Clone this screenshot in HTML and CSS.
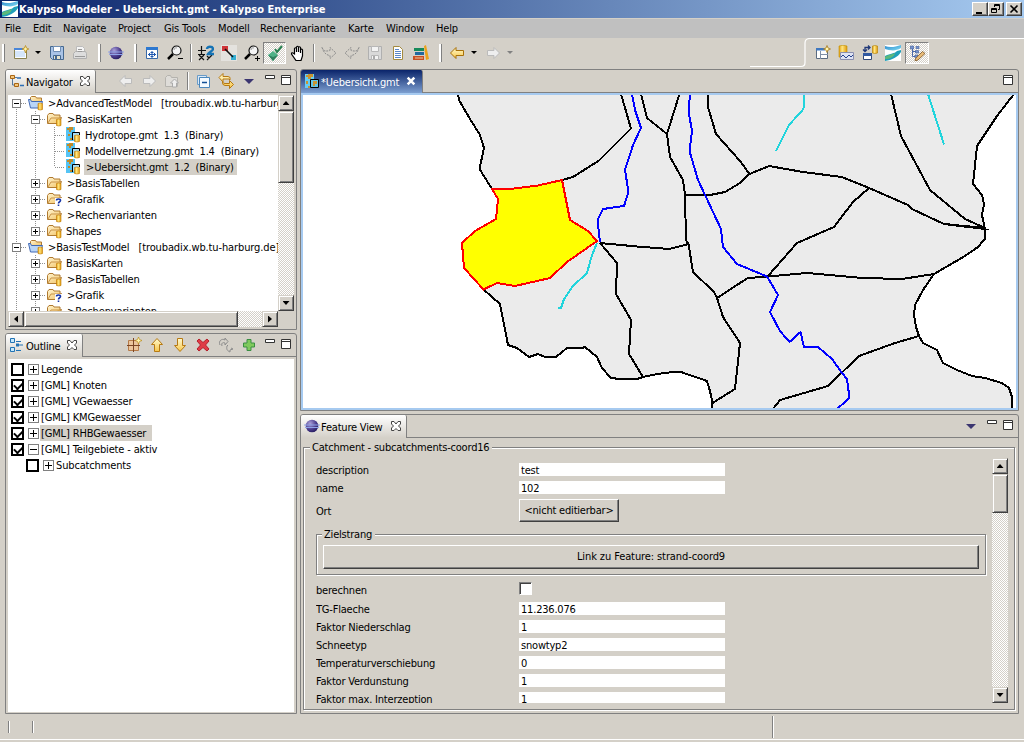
FILE: index.html
```html
<!DOCTYPE html>
<html lang="de">
<head>
<meta charset="utf-8">
<title>Kalypso Modeler - Uebersicht.gmt - Kalypso Enterprise</title>
<link rel="stylesheet" href="styles.css">
</head>
<body>
<svg class="defs" width="0" height="0">
<defs>
<linearGradient id="gold" x1="0" y1="0" x2="0" y2="1"><stop offset="0" stop-color="#fffbd0"/><stop offset="1" stop-color="#f7c64a"/></linearGradient>
<linearGradient id="fold" x1="0" y1="0" x2="1" y2="1"><stop offset="0" stop-color="#fff3cf"/><stop offset="1" stop-color="#f2c465"/></linearGradient>
<linearGradient id="cyl" x1="0" y1="0" x2="1" y2="0"><stop offset="0" stop-color="#e09a10"/><stop offset=".4" stop-color="#ffe680"/><stop offset="1" stop-color="#e09a10"/></linearGradient>
<radialGradient id="ball" cx=".35" cy=".3" r=".8"><stop offset="0" stop-color="#a99fd8"/><stop offset=".6" stop-color="#4a3b8c"/><stop offset="1" stop-color="#1f1555"/></radialGradient>
<linearGradient id="water" x1="0" y1="0" x2="1" y2="1"><stop offset="0" stop-color="#2b86cc"/><stop offset="1" stop-color="#7fdcf2"/></linearGradient>
</defs>
<symbol id="kalypso" viewBox="0 0 16 16"><path fill="#fff" d="M0 0h16v16H0z"/><path fill="url(#water)" d="M0 1c5 2 10 1 16-1v3C10 7 4 5 0 4z"/><path fill="#1f9fb8" d="M0 11c6-3 9-2 12-5l4-1v2c-3 5-9 8-16 9z"/><path fill="#5cb87a" d="M0 12c4-3 7-2 10-4-1 4-5 6-10 6z"/></symbol>
<symbol id="new" viewBox="0 0 16 16"><path fill="#fbfbff" stroke="#8a8250" d="M1.500 3.500h12v10h-12z"/><path fill="#4a86d8" d="M1 3h9v2H1z"/><path fill="#d5e6fb" d="M2 6h10v6H2z"/><path fill="#fdf3a8" stroke="#b98a1c" stroke-width=".8" d="M12.500.5l1 2.500 2.300 1-2.300 1-1 3-1-3-2.500-1 2.500-1z"/></symbol>
<symbol id="save" viewBox="0 0 16 16"><path fill="#a9c3e6" stroke="#45688f" d="M1.500 1.500h13v13h-11l-2-2z"/><path fill="#fff" stroke="#6e8db3" d="M4.500 1.500h7v5h-7z"/><path fill="#e7e3cd" stroke="#45688f" d="M4.500 10.500h7v4h-7z"/><path fill="#45688f" d="M6 11h2v3H6z"/></symbol>
<symbol id="saveoff" viewBox="0 0 16 16"><path fill="#d9d9d9" stroke="#b0b0b0" d="M1.500 1.500h13v13h-13z"/><path fill="#f4f4f4" stroke="#b8b8b8" d="M4.500 1.500h7v5h-7zM4.500 10.500h7v4h-7z"/><path fill="#aaa" d="M6 11h2v3H6z"/></symbol>
<symbol id="print" viewBox="0 0 16 16"><path fill="#f5f5f5" stroke="#bbb" d="M4.500 1.500h6l2 2v5h-8z"/><path fill="#ddd" stroke="#b0b0b0" d="M1.500 8.500l2-2h10l1 2v5h-13z"/><path stroke="#999" d="M6 4.500h4M6 6.500h4M3 11.500h10"/></symbol>
<symbol id="eclipse" viewBox="0 0 16 16"><circle cx="8" cy="8" r="6.300" fill="url(#ball)"/><path stroke="#8fa3e8" stroke-width="1.200" d="M0 7h16M1 9.500h14"/></symbol>
<symbol id="fullmap" viewBox="0 0 16 16"><path fill="#fff" stroke="#3a6aa8" d="M2.500 2.500h11v11h-11z"/><path fill="#2d78d0" d="M2 2h12v3H2z"/><path stroke="#1f58b0" d="M8 6v7M4 9.500h8M6.500 7.500h3M6.500 11.500h3M5.500 8v3M10.500 8v3"/></symbol>
<symbol id="zoomout" viewBox="0 0 16 16"><path stroke="#000" stroke-width="2.500" d="M1 14l5-5"/><circle cx="9.500" cy="5.500" r="4.500" fill="#f4f4f4" stroke="#111" stroke-width="1.200"/><path stroke="#999" fill="none" d="M7 5c0-2 2-2.500 3-2"/><path stroke="#000" d="M11 13.500h5"/></symbol>
<symbol id="zoomin" viewBox="0 0 16 16"><path stroke="#000" stroke-width="2.500" d="M1 14l5-5"/><circle cx="9.500" cy="5.500" r="4.500" fill="#f4f4f4" stroke="#111" stroke-width="1.200"/><path stroke="#999" fill="none" d="M7 5c0-2 2-2.500 3-2"/><path stroke="#000" d="M11 13.500h5M13.500 11v5"/></symbol>
<symbol id="info" viewBox="0 0 16 16"><path stroke="#111" stroke-width="1.200" d="M0 5.500h8M3.500 1v8M0 9.500h7M1 10l5 5M6 10l-5 5M9 11l2 2M14 10l-5 5"/><path fill="none" stroke="#1673b5" stroke-width="2.400" d="M9 4c0-3 6-3 6 0 0 2-4 3-5 5h6"/></symbol>
<symbol id="relation" viewBox="0 0 16 16"><path fill="#e4e2de" d="M0 0h16v16H0z"/><path fill="#cf3438" d="M1 1h6v5H1z"/><path fill="#35aed2" d="M10 10h5v5h-5z"/><path stroke="#111" stroke-width="1.600" d="M4 4l8 8"/></symbol>
<symbol id="edit" viewBox="0 0 16 16"><path fill="#4fb287" d="M1 10l5-4 5 4-5 6z"/><path fill="#2f805d" d="M1 10l5 6 5-6-5 2z"/><path fill="none" stroke="#278050" stroke-width="2" d="M8 4l2 3 5-6"/></symbol>
<symbol id="hand" viewBox="0 0 16 16"><path fill="#fff" stroke="#000" stroke-width="1.200" d="M4.500 9V3.500q1-1.500 2 0V7 2q1-1.500 2 0v5-4.500q1-1.500 2 0V8 4.500q1.500-1 2 .5v6L11 15.500H6L1.500 9q0-1.800 1.500-1z"/></symbol>
<symbol id="redo" viewBox="0 0 16 16"><path fill="none" stroke="#8c8c8c" stroke-dasharray="2 1" d="M1 2.500c2 4 4 4 8 3V2.500l6 5.500-6 5.500v-3C5 10 3 8 1 2.500z"/></symbol>
<symbol id="undo" viewBox="0 0 16 16"><path fill="none" stroke="#8c8c8c" stroke-dasharray="2 1" d="M15 2.500c-2 4-4 4-8 3V2.500L1 8l6 5.500v-3c4-.5 6-2.500 8-8z"/></symbol>
<symbol id="doc" viewBox="0 0 16 16"><path fill="#fff" stroke="#a38a40" d="M3.500 1.500h6l3 3v10h-9z"/><path stroke="#5a86c8" d="M5 4.500h4M5 6.500h6M5 8.500h6M5 10.500h6M5 12.500h6"/></symbol>
<symbol id="books" viewBox="0 0 16 16"><path fill="#168a5a" d="M1 3h10v3H1z"/><path fill="#22689e" d="M2 7h9v3H2z"/><path fill="#c94e22" d="M0 11h11v4H0z"/><path stroke="#e8c9a0" d="M2 13h8"/><path fill="#eaa21c" d="M11 1l2-1 3 14-3 1z"/></symbol>
<symbol id="back" viewBox="0 0 16 16"><path fill="url(#gold)" stroke="#a8700a" d="M1.500 8l5.500-5.500v3h7.500v5H7v3z"/></symbol>
<symbol id="fwdoff" viewBox="0 0 16 16"><path fill="#eee" stroke="#bbb" d="M14.500 8L9 2.500v3H2.500v5H9v3z"/></symbol>
<symbol id="backoff" viewBox="0 0 16 16"><path fill="#eee" stroke="#bbb" d="M1.500 8L7 2.500v3h6.500v5H7v3z"/></symbol>
<symbol id="upoff" viewBox="0 0 16 16"><path fill="#dedcd8" stroke="#b5b3ae" d="M1.500 4.500l2-2h3l1 2h6v9h-12z"/><path fill="#eee" stroke="#aaa" d="M10.500 6l4 4h-2v4h-4v-4h-2z"/></symbol>
<symbol id="collapse" viewBox="0 0 16 16"><path fill="#dbe9f7" stroke="#6a9cc8" d="M2.500 2.500h9v9h-9z"/><path fill="#f4faff" stroke="#4a86bb" d="M4.500 4.500h10v10h-10z"/><path stroke="#124f95" stroke-width="1.500" d="M7 9.500h5"/></symbol>
<symbol id="link" viewBox="0 0 16 16"><path fill="url(#gold)" stroke="#b67912" d="M1 4.500l4-4v3h5q3 0 2 3.500-1-1.500-2-1H5v3zM15.500 11.500l-4 4v-3H7Q4 12 4.500 9 5.500 10.500 7 10.500h4.500v-3z"/></symbol>
<symbol id="up" viewBox="0 0 16 16"><path fill="url(#gold)" stroke="#b67912" d="M8 1.500l5.500 6H10.500v7h-5v-7H2.500z"/></symbol>
<symbol id="down" viewBox="0 0 16 16"><path fill="url(#gold)" stroke="#b67912" d="M8 14.500l5.500-6H10.500v-7h-5v7H2.500z"/></symbol>
<symbol id="delete" viewBox="0 0 16 16"><path fill="#e03b46" stroke="#b5202c" d="M4 2l4 3.500L12 2l2 2-3.500 4 3.500 4-2 2-4-3.500L4 14l-2-2 3.500-4L2 4z"/></symbol>
<symbol id="refresh" viewBox="0 0 16 16"><path fill="none" stroke="#8c8c8c" d="M2 8C0 4 4 1 7 3V1l3 3.500L7 8V6C5 5 3 6 4 9M10 8l-1 1c-1 4 1 5 3 6v-2l3-1-2-1"/></symbol>
<symbol id="plus" viewBox="0 0 16 16"><path fill="#7fc95c" stroke="#3a8f43" d="M6 2.500h4V6h3.500v4H10v3.500H6V10H2.500V6H6z"/></symbol>
<symbol id="newtheme" viewBox="0 0 16 16"><path fill="#ebc49c" stroke="#b57a48" d="M2.500 3.500h10v10h-10z"/><path stroke="#7a4424" d="M7.500 1v14M1 8.500h13"/><path fill="#fff7b0" stroke="#b98a1c" stroke-width=".7" d="M12.500 0l1 2.500 2.500 1-2.500 1-1 2.500-1-2.500-2.500-1 2.500-1z"/></symbol>
<symbol id="nav" viewBox="0 0 16 16"><path fill="#f4c77c" stroke="#a86514" d="M1.500 2.500h4v3h-4zM5.500 10.500h4v3h-4z"/><path fill="none" stroke="#55779c" d="M3.500 6v6H5M6 4.500h2"/><path stroke="#2e6fb5" stroke-width="1.500" d="M8 5h4M11 12.500h4"/></symbol>
<symbol id="outline" viewBox="0 0 16 16"><path fill="#c6e8fb" stroke="#2273b4" d="M1.500 1.500h4v4h-4zM1.500 10.500h4v4h-4z"/><path stroke="#2273b4" d="M7 4.500h5M10 8h4M7 13.500h5"/><path fill="#2273b4" d="M7 6.500h3v3H7z"/></symbol>
<symbol id="map" viewBox="0 0 16 16"><path fill="#66cdf5" d="M1 1h9v14H1z"/><path fill="#c99432" d="M4 1h5v3H7v2H4V4H2V2h2zM2 8h2v3H2zM4 13h2v2H4z"/><path fill="#63c4e8" stroke="#000" d="M6.500 6.500h8v8h-8z"/><path fill="#c99432" d="M9 8h4v3h-2v2H9z"/></symbol>
<symbol id="gmt" viewBox="0 0 16 16"><path fill="#55c4f5" d="M0 0h9v14H0z"/><path fill="#c08b28" d="M3 0h4v3H5v2H3V3H1V1h2zM2 7h2v2H2zM4 11h2v2H4z"/><path fill="#a9dff5" stroke="#000" d="M6.500 13V5.500h7V8"/><path fill="url(#cyl)" stroke="#c07800" stroke-width=".6" d="M8.500 8.500q2.500-1 5 0v6q-2.500 1-5 0z"/></symbol>
<symbol id="folder" viewBox="0 0 16 16"><path fill="url(#fold)" stroke="#b07a30" d="M.5 12.500v-8l1.500-2h4l1 1.500h6V7l1.500-.5-2.500 6z"/><path fill="none" stroke="#c99448" d="M1 12l3-5h9"/><path fill="url(#cyl)" stroke="#c07800" stroke-width=".6" d="M9.500 8.500q2.500-1 4.500 0v6q-2 1-4.500 0z"/></symbol>
<symbol id="folderq" viewBox="0 0 16 16"><path fill="url(#fold)" stroke="#b07a30" d="M.5 12.500v-8l1.500-2h4l1 1.500h6V7l1.500-.5-2.500 6z"/><path fill="none" stroke="#c99448" d="M1 12l3-5h9"/><path fill="#fff" d="M8 7h7v8H8z"/><path fill="none" stroke="#1635a8" stroke-width="1.600" d="M9.500 9.500c0-2 4-2 4 0 0 1.500-2 1-2 3M11.500 13.500V15"/></symbol>
<symbol id="project" viewBox="0 0 16 16"><path fill="url(#fold)" stroke="#b07a30" d="M2.500 5.500v-3l1-1h4l1 1.500h5v4h-11z"/><path fill="#b9d5f7" stroke="#4169b5" d="M.5 4.500h2l1 2h11l-2 6.500H2.500z"/><path fill="url(#cyl)" stroke="#c07800" stroke-width=".6" d="M10 8.500q2.300-1 4.500 0v6q-2.200 1-4.500 0z"/></symbol>
<symbol id="persp" viewBox="0 0 16 16"><path fill="#fff" stroke="#5a6a80" d="M1.500 3.500h11v10h-11z"/><path fill="#3f78c0" d="M1 3h9v2.500H1z"/><path stroke="#8090a8" d="M5.500 6v8M6 9.500h7"/><path fill="#fff7b0" stroke="#a87a1c" stroke-width=".8" d="M12 .5l1 2.500 2.500 1L13 5l-1 2.500L11 5 8.500 4 11 3z"/></symbol>
<symbol id="dbgraph" viewBox="0 0 16 16"><path fill="url(#cyl)" stroke="#c09000" stroke-width=".6" d="M1 1q4-1.500 8 0v11q-4 1.500-8 0z"/><path fill="#dfe3f3" stroke="#8a8fb0" d="M2.500 7.500h13v7h-13z"/><path fill="none" stroke="#24418c" d="M3 12l2-2 3 3 3-3 2 2 2-2"/></symbol>
<symbol id="dbtable" viewBox="0 0 16 16"><path fill="#fff" stroke="#304878" d="M1.500 8.500h8v6h-8z"/><path fill="#3058a0" d="M1 8h9v3H1z"/><path fill="none" stroke="#203878" stroke-width="1.300" d="M3 6V2.500h5M6 .5l2 2-2 2M1 4.500l2 2 2-2"/><path fill="url(#cyl)" stroke="#b08000" stroke-width=".6" d="M10.500 1q2.500-1 5 0v7q-2.500 1-5 0z"/></symbol>
<symbol id="treeedit" viewBox="0 0 16 16"><path fill="none" stroke="#4a68a8" d="M3.500 3v8.500H6M4 6.500h4"/><path fill="#7894cc" stroke="#3c5a9c" stroke-width=".6" d="M1.500 1h3v3h-3zM7 1.500h3v2H7zM6.500 5.500h3v2.500h-3zM6 10h3v2.500H6z"/><path fill="#e8bb78" stroke="#7a5424" stroke-width=".8" d="M13.500 6.500L16 8.500 9 15l-3 1 .8-3z"/></symbol>
<symbol id="close" viewBox="0 0 12 12"><path fill="#fff" stroke="#444" d="M1.500 1.500h2.500l2 2.500 2-2.500h2.500V4L8.500 6l2 2v2.500H8L6 8.500l-2 2H1.500V8l2-2-2-2z"/></symbol>
<symbol id="closew" viewBox="0 0 12 12"><path fill="none" stroke="#fff" stroke-width="3" d="M2 2l8 8M10 2l-8 8"/></symbol>
<symbol id="mini" viewBox="0 0 10 4"><path fill="#fff" stroke="#333" d="M.5.5h9v3h-9z"/></symbol>
<symbol id="maxi" viewBox="0 0 10 10"><path fill="#fff" stroke="#333" d="M.5.5h9v9h-9zM1 2.500h8"/></symbol>
<symbol id="tri" viewBox="0 0 10 5"><path fill="#3b3570" d="M0 0h10L5 5z"/></symbol>
</svg>

<div class="window">
<header class="titlebar">
  <svg class="i"><use href="#kalypso"/></svg>
  <span class="title">Kalypso Modeler - Uebersicht.gmt - Kalypso Enterprise</span>
  <span class="wbtn"><svg width="10" height="10"><path fill="#000" d="M1 8h6v2H1z"/></svg></span>
  <span class="wbtn"><svg width="10" height="10"><path fill="none" stroke="#000" d="M3.500 3V.5h5v5H7M3 1.500h6M.5 4.500h5v4h-5zM0 5.500h6"/></svg></span>
  <span class="wbtn last"><svg width="10" height="10"><path stroke="#000" stroke-width="1.600" d="M1.500 1.500l7 7M8.500 1.500l-7 7"/></svg></span>
</header>
<nav class="menubar"><span class="m28">File</span><span class="m30">Edit</span><span class="m55">Navigate</span><span class="m46">Project</span><span class="m54">Gis Tools</span><span class="m42">Modell</span><span class="m88">Rechenvariante</span><span class="m38">Karte</span><span class="m50">Window</span><span>Help</span></nav>
<div class="toolbars">
  <div class="tools">
    <i class="handle h1"></i><b class="t"><svg class="i"><use href="#new"/></svg></b><b class="dd"></b><b class="t"><svg class="i"><use href="#save"/></svg></b><b class="t"><svg class="i"><use href="#print"/></svg></b>
    <i class="handle"></i><b class="t"><svg class="i"><use href="#eclipse"/></svg></b>
    <i class="handle"></i><b class="t"><svg class="i"><use href="#fullmap"/></svg></b><b class="t"><svg class="i"><use href="#zoomout"/></svg></b>
    <i class="sep"></i><b class="t"><svg class="i"><use href="#info"/></svg></b><b class="t"><svg class="i"><use href="#relation"/></svg></b><b class="t"><svg class="i"><use href="#zoomin"/></svg></b><b class="t on"><svg class="i"><use href="#edit"/></svg></b><b class="t"><svg class="i"><use href="#hand"/></svg></b>
    <i class="sep"></i><b class="t"><svg class="i"><use href="#redo"/></svg></b><b class="t"><svg class="i"><use href="#undo"/></svg></b><b class="t"><svg class="i"><use href="#saveoff"/></svg></b><b class="t"><svg class="i"><use href="#doc"/></svg></b><b class="t"><svg class="i"><use href="#books"/></svg></b>
    <i class="handle"></i><b class="t"><svg class="i"><use href="#back"/></svg></b><b class="dd"></b><b class="t"><svg class="i"><use href="#fwdoff"/></svg></b><b class="dd off"></b>
  </div>
  <div class="perspectives">
    <svg class="curve" width="274" height="31"><path fill="none" stroke="#fff" stroke-width="1.200" d="M0 28.500h51q4 0 4-4V5q0-4.500 5-4.500h214"/></svg>
    <b class="t"><svg class="i"><use href="#persp"/></svg></b><b class="t"><svg class="i"><use href="#dbgraph"/></svg></b><b class="t"><svg class="i"><use href="#dbtable"/></svg></b><b class="t"><svg class="i"><use href="#kalypso"/></svg></b><b class="t on"><svg class="i"><use href="#treeedit"/></svg></b>
  </div>
</div>

<main class="workbench">
<div class="left">
  <section class="panel navigator">
    <div class="head"><div class="tab tab-nav"><svg class="i"><use href="#nav"/></svg><span>Navigator</span><svg class="x"><use href="#close"/></svg></div>
      <div class="bar"><b class="t"><svg class="i"><use href="#backoff"/></svg></b><b class="t"><svg class="i"><use href="#fwdoff"/></svg></b><b class="t"><svg class="i"><use href="#upoff"/></svg></b><i class="sep"></i><b class="t"><svg class="i"><use href="#collapse"/></svg></b><b class="t"><svg class="i"><use href="#link"/></svg></b><b class="t"><svg class="tri"><use href="#tri"/></svg></b><svg class="mini"><use href="#mini"/></svg><svg class="maxi"><use href="#maxi"/></svg></div>
    </div>
    <div class="treebox">
      <div class="tree">
        <div class="row"><i class="c first"><u class="ex m"></u></i><svg class="i"><use href="#project"/></svg><span class="proj">&gt;AdvancedTestModel &nbsp;[troubadix.wb.tu-harburg.de]</span></div>
        <div class="row"><i class="c v"></i><i class="c v"><u class="ex m"></u></i><svg class="i"><use href="#folder"/></svg><span>&gt;BasisKarten</span></div>
        <div class="row"><i class="c v"></i><i class="c v"></i><i class="c v h"></i><svg class="i"><use href="#gmt"/></svg><span class="plain">Hydrotope.gmt &nbsp;1.3 &nbsp;(Binary)</span></div>
        <div class="row"><i class="c v"></i><i class="c v"></i><i class="c v h"></i><svg class="i"><use href="#gmt"/></svg><span class="plain">Modellvernetzung.gmt &nbsp;1.4 &nbsp;(Binary)</span></div>
        <div class="row"><i class="c v"></i><i class="c v"></i><i class="c end h"></i><svg class="i"><use href="#gmt"/></svg><span class="sel">&gt;Uebersicht.gmt &nbsp;1.2 &nbsp;(Binary)</span></div>
        <div class="row"><i class="c v"></i><i class="c v"><u class="ex"></u></i><svg class="i"><use href="#folder"/></svg><span>&gt;BasisTabellen</span></div>
        <div class="row"><i class="c v"></i><i class="c v"><u class="ex"></u></i><svg class="i"><use href="#folderq"/></svg><span>&gt;Grafik</span></div>
        <div class="row"><i class="c v"></i><i class="c v"><u class="ex"></u></i><svg class="i"><use href="#folder"/></svg><span>&gt;Rechenvarianten</span></div>
        <div class="row"><i class="c v"></i><i class="c end"><u class="ex"></u></i><svg class="i"><use href="#folder"/></svg><span class="plain">Shapes</span></div>
        <div class="row"><i class="c v"><u class="ex m"></u></i><svg class="i"><use href="#project"/></svg><span class="proj">&gt;BasisTestModel &nbsp;[troubadix.wb.tu-harburg.de]</span></div>
        <div class="row"><i class="c v"></i><i class="c v"><u class="ex"></u></i><svg class="i"><use href="#folder"/></svg><span class="plain">BasisKarten</span></div>
        <div class="row"><i class="c v"></i><i class="c v"><u class="ex"></u></i><svg class="i"><use href="#folder"/></svg><span>&gt;BasisTabellen</span></div>
        <div class="row"><i class="c v"></i><i class="c v"><u class="ex"></u></i><svg class="i"><use href="#folderq"/></svg><span>&gt;Grafik</span></div>
        <div class="row"><i class="c v"></i><i class="c v"><u class="ex"></u></i><svg class="i"><use href="#folder"/></svg><span>&gt;Rechenvarianten</span></div>
      </div>
      <div class="vscroll"><b class="sb up"></b><b class="thumb nav-v"></b><b class="sb down"></b></div>
      <div class="hscroll"><b class="sb lt"></b><b class="thumb nav-h"></b><b class="sb rt"></b></div>
    </div>
  </section>
  <section class="panel outline">
    <div class="head"><div class="tab tab-out"><svg class="i"><use href="#outline"/></svg><span>Outline</span><svg class="x"><use href="#close"/></svg></div>
      <div class="bar"><b class="t"><svg class="i"><use href="#newtheme"/></svg></b><b class="t"><svg class="i"><use href="#up"/></svg></b><b class="t"><svg class="i"><use href="#down"/></svg></b><b class="t"><svg class="i"><use href="#delete"/></svg></b><b class="t"><svg class="i"><use href="#refresh"/></svg></b><b class="t"><svg class="i"><use href="#plus"/></svg></b><svg class="mini"><use href="#mini"/></svg><svg class="maxi"><use href="#maxi"/></svg></div>
    </div>
    <div class="list">
      <div class="orow"><i class="cb"></i><u class="ex"></u><span>Legende</span></div>
      <div class="orow"><i class="cb ck"></i><u class="ex"></u><span>[GML] Knoten</span></div>
      <div class="orow"><i class="cb ck"></i><u class="ex"></u><span>[GML] VGewaesser</span></div>
      <div class="orow"><i class="cb ck"></i><u class="ex"></u><span>[GML] KMGewaesser</span></div>
      <div class="orow"><i class="cb ck"></i><u class="ex"></u><span class="osel">[GML] RHBGewaesser</span></div>
      <div class="orow"><i class="cb ck"></i><u class="ex m"></u><span>[GML] Teilgebiete - aktiv</span></div>
      <div class="orow sub"><i class="cb"></i><u class="ex"></u><span>Subcatchments</span></div>
    </div>
  </section>
</div>
<div class="right">
  <section class="panel editor">
    <div class="head"><div class="tab tab-ed"><svg class="i"><use href="#map"/></svg><span>*Uebersicht.gmt</span><svg class="x"><use href="#closew"/></svg></div>
      <div class="bar"><svg class="maxi"><use href="#maxi"/></svg></div>
    </div>
    <div class="mapframe">
      <svg class="mapview" viewBox="303 95 713 313">
        <path class="land" d="M458 94L459 100 470 119 480 135 484 148 479.500 169 492 189 498 199 496 219 475 231 462 243 464 268 483.500 289.500 500 304 508 345 517 348 529 357 538 354 545 357 556 357 567 348 582 348 585 347 597 357 602 368 611 378 620 379 637 379 643 377 657 374 677 371.500 681 372 707 381 710 391 712.500 403 712 409H1012V397L1009 388 1002 383 985 378 972 376 957 370 943 363 937 350 923 343 919 336 916 327 914 315 915 305 923 290 934 274 965 256 978 247 985.500 238 985 229 982 215 984 204 982 195 973 184 977 146 997 116 1014 94z"/>
        <g class="border">
          <path d="M458 94L459 100 470 119 480 135 484 148 479.500 169 492 189"/>
          <path d="M483.500 289.500L500 304 508 345 517 348 529 357 538 354 545 357 556 357 567 348 582 348 585 347 597 357 602 368 611 378 620 379 637 379 643 377 657 374 677 371.500 681 372 707 381 710 391 712.500 403 712 409"/>
          <path d="M1012 409V397L1009 388 1002 383 985 378 972 376 957 370 943 363 937 350 923 343 919 336 916 327 914 315 915 305 923 290 934 274 965 256 978 247 985.500 238 985 229 982 215 984 204 982 195 973 184 977 146 997 116 1014 94"/>
          <path d="M562 180L573 177 599 160.500 631 128.500 621 94M641 94L647 118 667 134 679.500 94M667 134L670 157 683 180 685 195 686 240 688.500 244 693 272 714 292 717 298 723 317 740 343 735 389 712.500 403"/>
          <path d="M600 243L637 246.500 669 249 688.500 244M600 243L617 263 616 294 631 320 629 354 643 377"/>
          <path d="M685 195H710L725 192 740 183 749.500 174 769 166 803 172 842 177 869 188 908 205 912 209 944 224 985 229M944 224L985 228M708 94V107L716 134 740 161 749.500 174M891 94L901 136 930 190 965 219 985 228"/>
          <path d="M869 188L853 202 834 227 797 243 768 276M717 298L740 283 748 278 768 276.500 807 273 863 278 902 279 934 274M919 336L895 343 859 356 828 386 780 400 773 409"/>
          <path class="thin" d="M944 223L989 230"/>
        </g>
        <path class="river" d="M632 94L635 110 641 128 633 145 625 170 628.500 192 624 206 603 209 597.500 220 600 242M690 94L688.500 111 692 131 689.500 151 698 180 721 229 723 247 737 264 767 276.500 778 295 770 312 780 331 789.500 342 800.500 332 804 347H818L832 359 842 373 847 379 849.500 398 837 409"/>
        <path class="brook" d="M597 243L592 255 587 273 573 286 564 299 561 308H558M804 94L803.500 109 789 125 776 151M928 94L944 144.500"/>
        <path class="active" d="M492 189H510L538 185.500 562 180 570 220 588 231 597 241 567 262 550 278 515 286 497 283 483.500 289.500 464 268 462 243 475 231 496 219 498 199z"/>
      </svg>
    </div>
  </section>
  <section class="panel feature">
    <div class="head"><div class="tab tab-fv"><svg class="i"><use href="#eclipse"/></svg><span>Feature View</span><svg class="x"><use href="#close"/></svg></div>
      <div class="bar"><b class="t"><svg class="tri"><use href="#tri"/></svg></b><svg class="mini"><use href="#mini"/></svg><svg class="maxi"><use href="#maxi"/></svg></div>
    </div>
    <div class="group outer">
      <span class="legend">Catchment - subcatchments-coord16</span>
      <div class="scroller">
        <div class="form">
          <div class="frow"><label>description</label><span class="field">test</span></div>
          <div class="frow"><label>name</label><span class="field">102</span></div>
          <div class="frow tall"><label>Ort</label><span class="button">&lt;nicht editierbar&gt;</span></div>
          <div class="group inner"><span class="legend">Zielstrang</span><span class="button wide">Link zu Feature: strand-coord9</span></div>
          <div class="frow check"><label>berechnen</label><i class="box"></i></div>
          <div class="frow"><label>TG-Flaeche</label><span class="field">11.236.076</span></div>
          <div class="frow"><label>Faktor Niederschlag</label><span class="field">1</span></div>
          <div class="frow"><label>Schneetyp</label><span class="field">snowtyp2</span></div>
          <div class="frow"><label>Temperaturverschiebung</label><span class="field">0</span></div>
          <div class="frow"><label>Faktor Verdunstung</label><span class="field">1</span></div>
          <div class="frow"><label>Faktor max. Interzeption</label><span class="field">1</span></div>
        </div>
        <div class="vscroll"><b class="sb up"></b><b class="thumb form-v"></b><b class="sb down"></b></div>
      </div>
    </div>
  </section>
</div>
</main>
<footer class="status"><i class="s1"></i><i class="s2"></i><i class="s3"></i></footer>
</div>
</body>
</html>
```
FILE: styles.css
```css
* { box-sizing: border-box; }
body { margin: 0; background: #d4d0c8; color: #000; font: 11px/16px "DejaVu Sans Condensed", "DejaVu Sans", sans-serif; letter-spacing: -0.2px; white-space: nowrap; }
b, i, u { font-weight: normal; font-style: normal; text-decoration: none; display: block; flex: none; }
svg { display: block; flex: none; }
.defs { position: absolute; }
.i { width: 16px; height: 16px; }
.window { width: 1024px; height: 742px; display: flex; flex-direction: column; overflow: hidden; }

.titlebar { height: 18px; display: flex; align-items: center; flex: none; padding: 0 2px; background: linear-gradient(90deg, #0a246a, #a6caf0); color: #fff; }
.title { flex: 1; padding: 2px 0 0 1px; font-weight: bold; letter-spacing: 0; }
.wbtn { width: 16px; height: 14px; display: flex; align-items: center; justify-content: center; background: #d4d0c8; border: 1px solid; border-color: #fff #404040 #404040 #fff; box-shadow: inset -1px -1px #808080; }
.wbtn.last { margin-left: 2px; }
.menubar { height: 19px; flex: none; margin-top: 1px; display: flex; padding: 2px 0 0 5px; background: #c0c0c0; letter-spacing: -0.15px; }
.menubar span { flex: none; }
.m28 { width: 28px; }
.m30 { width: 30px; }
.m38 { width: 38px; }
.m42 { width: 42px; }
.m46 { width: 46px; }
.m50 { width: 50px; }
.m54 { width: 54px; }
.m55 { width: 55px; }
.m88 { width: 88px; }

.toolbars { height: 31px; flex: none; display: flex; justify-content: space-between; }
.tools { display: flex; align-items: center; padding: 0 0 1px 2px; }
.t { width: 23px; height: 24px; display: flex; align-items: center; justify-content: center; }
.t.on { height: 22px; border: 1px solid; border-color: #808080 #fff #fff #808080; background: repeating-conic-gradient(#fff 0 25%, #d4d0c8 0 50%) 0 0 / 2px 2px; }
.handle { width: 13px; height: 18px; background: linear-gradient(90deg, #fff 2px, #808080 2px) 7px 0 / 3px 100% no-repeat; }
.handle.h1 { width: 7px; background-position: 0 0; }
.sep { width: 8px; height: 18px; background: linear-gradient(90deg, #808080 1px, #fff 1px) 4px 0 / 2px 100% no-repeat; }
.dd { width: 13px; height: 4px; background: #000; clip-path: polygon(3px 0, 9px 0, 6px 3px); }
.dd.off { background: #808080; }
.perspectives { position: relative; width: 274px; display: flex; align-items: center; padding: 0 0 1px 61px; gap: 0.6px; }
.perspectives .on { width: 24px; }
.curve { position: absolute; left: 0; top: 0; }

.workbench { display: flex; gap: 3px; height: 645px; flex: none; padding: 0 5px; }
.left { width: 292px; display: flex; flex-direction: column; gap: 3px; }
.right { width: 719px; display: flex; flex-direction: column; gap: 3px; }
.panel { border: 1px solid #808080; border-radius: 3px 3px 0 0; display: flex; flex-direction: column; }
.navigator { height: 261px; }
.outline { height: 381px; }
.editor { height: 342px; }
.feature { height: 300px; }
.head { height: 23px; display: flex; justify-content: space-between; flex: none; box-shadow: inset 0 -1px #808080; }
.tab { display: flex; align-items: center; padding: 0 4px 1px 3px; border-right: 1px solid #808080; border-radius: 2px 2px 0 0; background: linear-gradient(#fff, #d4d0c8); }
.tab span { flex: 1; padding: 3px 0 0 1px; }
.x { width: 12px; height: 12px; }
.tab-nav { width: 90px; }
.tab-out { width: 77px; }
.tab-fv { width: 106px; }
.tab-ed { width: 122px; color: #fff; background: linear-gradient(#0a246a, #7d9fd0); }
.tab-ed .x { width: 10px; height: 10px; margin-right: 2px; }
.bar { display: flex; align-items: center; padding-right: 5px; height: 22px; }
.bar .t { height: 20px; }
.tri { width: 10px; height: 5px; }
.mini { width: 10px; height: 4px; margin: 5px 6px 0 5px; align-self: flex-start; }
.maxi { width: 10px; height: 10px; margin-top: 5px; align-self: flex-start; }

.treebox { display: grid; grid-template: 216px 16px / 270px 16px; margin: 2px 0 0 2px; letter-spacing: -0.15px; }
.tree { overflow: hidden; background: #fff; }
.row { height: 16px; display: flex; }
.row .i { margin-left: 1px; }
.row span { height: 16px; line-height: 17px; padding-left: 4px; }
.row .plain { padding-left: 3px; }
.row .proj { word-spacing: 1.5px; letter-spacing: -0.12px; }
.row .sel { margin-left: 2px; padding: 0 3px 0 2px; background: #d4d0c8; }
.c { width: 19px; height: 16px; padding: 4px 0 0 4px; background-repeat: no-repeat; }
.c.v { background-image: repeating-linear-gradient(#909090 0 1px, #fff 1px 2px); background-size: 1px 16px; background-position: 8px 0; }
.c.end { background-image: repeating-linear-gradient(#909090 0 1px, #fff 1px 2px); background-size: 1px 8px; background-position: 8px 0; }
.c.first { background-image: repeating-linear-gradient(#909090 0 1px, #fff 1px 2px); background-size: 1px 8px; background-position: 8px 8px; }
.c.h::after { content: ""; display: block; width: 10px; height: 1px; margin: 4px 0 0 5px; background: repeating-linear-gradient(90deg, #909090 0 1px, #fff 1px 2px); }
.ex { width: 9px; height: 9px; border: 1px solid #808080; background: linear-gradient(#000, #000) center / 5px 1px no-repeat, linear-gradient(#000, #000) center / 1px 5px no-repeat, #fff; }
.ex.m { background: linear-gradient(#000, #000) center / 5px 1px no-repeat, #fff; }
.c .ex::after { content: ""; display: block; width: 6px; height: 1px; margin: 3px 0 0 8px; background: repeating-linear-gradient(90deg, #909090 0 1px, #fff 1px 2px); }

.vscroll, .hscroll { display: flex; background: repeating-conic-gradient(#fff 0 25%, #d4d0c8 0 50%) 0 0 / 2px 2px; }
.vscroll { flex-direction: column; }
.sb, .thumb { background: #d4d0c8; border: 1px solid; border-color: #d4d0c8 #404040 #404040 #d4d0c8; box-shadow: inset 1px 1px #fff, inset -1px -1px #808080; }
.sb { width: 16px; height: 16px; display: flex; align-items: center; justify-content: center; }
.sb::after { content: ""; width: 7px; height: 4px; background: #000; }
.sb.up::after { clip-path: polygon(50% 0, 100% 100%, 0 100%); }
.sb.down::after { clip-path: polygon(0 0, 100% 0, 50% 100%); }
.sb.lt::after { width: 4px; height: 7px; clip-path: polygon(100% 0, 100% 100%, 0 50%); }
.sb.rt::after { width: 4px; height: 7px; clip-path: polygon(0 0, 100% 50%, 0 100%); }
.sb.down { margin-top: auto; }
.sb.rt { margin-left: auto; }
.thumb.nav-v { height: 72px; }
.thumb.nav-h { width: 214px; }
.thumb.form-v { height: 39px; }

.list { flex: 1; margin: 2px 2px 1px; padding-top: 2px; background: #fff; letter-spacing: -0.15px; }
.orow { height: 16px; display: flex; align-items: center; padding-left: 3px; }
.orow.sub { padding-left: 18px; }
.cb { width: 13px; height: 13px; border: 2px solid #000; background: #fff; }
.cb.ck::after { content: ""; display: block; width: 7px; height: 4px; margin: 1px 0 0 1px; border: solid #000; border-width: 0 0 2px 2px; transform: rotate(-45deg); }
.orow .ex { width: 11px; height: 11px; margin-left: 4px; background-size: 7px 1px, 1px 7px, auto; }
.orow .ex.m { background-size: 7px 1px, auto; }
.orow span { height: 16px; line-height: 17px; margin-left: 1px; padding-left: 1px; }
.orow .osel { padding-right: 6px; background: #d4d0c8; }

.mapframe { flex: 1; border: 2px solid #a6caf0; background: #fff; }
.mapview { width: 713px; height: 313px; shape-rendering: crispEdges; fill: none; stroke-width: 2; }
.land { fill: #ebebeb; }
.border { stroke: #000; }
.thin { stroke-width: 1; }
.river { stroke: #00f; }
.brook { stroke: #21d4dc; }
.active { fill: #ff0; stroke: #f00; }

.group { border: 1px solid #808080; box-shadow: 1px 1px #fff, inset 1px 1px #fff; }
.legend { display: block; width: max-content; height: 16px; background: #d4d0c8; }
.outer { width: 712px; height: 263px; margin: 9px 0 0 2px; }
.outer > .legend { margin: -8px 0 0 6px; padding: 0 3px 0 2px; }
.scroller { display: flex; justify-content: space-between; height: 245px; margin: 2px 6px 0 12px; }
.form { width: 671px; padding-top: 5px; overflow: hidden; }
.frow { height: 13px; display: flex; align-items: center; margin-bottom: 5px; }
.frow label { width: 203px; padding-top: 3px; }
.field { width: 206px; height: 13px; padding-left: 2px; line-height: 15px; background: #fff; }
.frow.tall { height: 23px; margin-bottom: 12px; }
.button { width: 100px; height: 23px; line-height: 22px; text-align: center; border: 1px solid; border-color: #fff #404040 #404040 #fff; box-shadow: inset -1px -1px #808080; }
.inner { width: 670px; height: 41px; margin-bottom: 7px; }
.inner .legend { margin: -8px 0 0 5px; padding: 0 3px 0 2px; }
.wide { display: block; width: 656px; height: 24px; margin: 2px 0 0 6px; letter-spacing: -0.1px; }
.frow.check { margin-bottom: 7px; }
.frow.check label { padding-top: 5px; }
.box { width: 13px; height: 13px; background: #fff; border: 1px solid; border-color: #808080 #fff #fff #808080; box-shadow: inset 1px 1px #404040; }

.status { flex: 1; display: flex; border-bottom: 2px solid #d4d0c8; box-shadow: inset 0 -1px #fff; }
.status i { width: 2px; border-left: 1px solid #808080; border-right: 1px solid #fff; }
.s1 { height: 12px; margin: 7px 0 0 8px; }
.s2 { height: 12px; margin: 7px 0 0 22px; }
.s3 { height: 22px; margin: 2px 0 0 738px; }
```
